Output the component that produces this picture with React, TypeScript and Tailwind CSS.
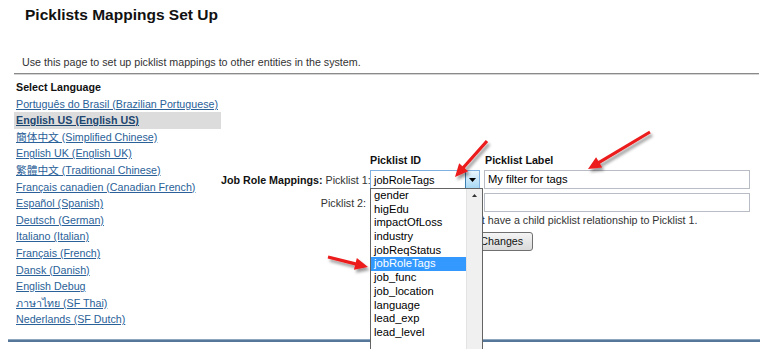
import React from "react";

const LANGUAGES: { label: string; selected?: boolean }[] = [
  { label: "Português do Brasil (Brazilian Portuguese)" },
  { label: "English US (English US)", selected: true },
  { label: "簡体中文 (Simplified Chinese)" },
  { label: "English UK (English UK)" },
  { label: "繁體中文 (Traditional Chinese)" },
  { label: "Français canadien (Canadian French)" },
  { label: "Español (Spanish)" },
  { label: "Deutsch (German)" },
  { label: "Italiano (Italian)" },
  { label: "Français (French)" },
  { label: "Dansk (Danish)" },
  { label: "English Debug" },
  { label: "ภาษาไทย (SF Thai)" },
  { label: "Nederlands (SF Dutch)" },
];

const OPTIONS = [
  "gender",
  "higEdu",
  "impactOfLoss",
  "industry",
  "jobReqStatus",
  "jobRoleTags",
  "job_func",
  "job_location",
  "language",
  "lead_exp",
  "lead_level",
];

// polygon for a callout arrow, tail -> tip
function arrowPoints(tx: number, ty: number, hx: number, hy: number) {
  const shaft = 3.2;
  const headLen = 13;
  const headW = 12;
  const dx = hx - tx;
  const dy = hy - ty;
  const len = Math.hypot(dx, dy);
  const ux = dx / len;
  const uy = dy / len;
  const px = -uy;
  const py = ux;
  const bx = hx - ux * headLen;
  const by = hy - uy * headLen;
  const pts = [
    [tx + (px * shaft) / 2, ty + (py * shaft) / 2],
    [bx + (px * shaft) / 2, by + (py * shaft) / 2],
    [bx + (px * headW) / 2, by + (py * headW) / 2],
    [hx, hy],
    [bx - (px * headW) / 2, by - (py * headW) / 2],
    [bx - (px * shaft) / 2, by - (py * shaft) / 2],
    [tx - (px * shaft) / 2, ty - (py * shaft) / 2],
  ];
  return pts.map((p) => p.join(",")).join(" ");
}

function Arrows() {
  return (
    <svg className="pointer-events-none absolute inset-0 z-20" width={770} height={349}>
      <defs>
        <filter id="shadow" x="-20%" y="-20%" width="140%" height="140%">
          <feDropShadow dx="2" dy="3" stdDeviation="1.6" floodColor="#000" floodOpacity="0.4" />
        </filter>
      </defs>
      <g fill="#ec1c1c" filter="url(#shadow)">
        <polygon points={arrowPoints(487, 141, 455, 177)} />
        <polygon points={arrowPoints(650, 132, 588, 169)} />
        <polygon points={arrowPoints(328, 257, 368, 267)} />
      </g>
    </svg>
  );
}

function PicklistSelect() {
  return (
    <div className="relative h-[19px] w-[110px]">
      <div className="flex h-full w-full items-center border border-[#7fb0df] bg-white">
        <span className="flex-1 pl-[3px] text-[11px] leading-[14px] text-black">jobRoleTags</span>
        <div className="flex h-full w-[14px] items-center justify-center border-l border-[#3c7fb1] bg-gradient-to-b from-[#eaf6fd] to-[#a7d9f5]">
          <svg width="7" height="4" viewBox="0 0 7 4">
            <path d="M0 0h7L3.5 4z" fill="#000" />
          </svg>
        </div>
      </div>

      {/* open option list */}
      <div className="absolute left-0 top-[18px] z-10 flex h-[180px] w-[113px] border border-[#646464] bg-white">
        <div className="w-[95px]">
          {OPTIONS.map((opt) => (
            <div
              key={opt}
              className={
                opt === "jobRoleTags"
                  ? "h-[13.7px] bg-[#3399ff] pl-[3px] text-[11.2px] leading-[13.7px] text-white"
                  : "h-[13.7px] pl-[3px] text-[11.2px] leading-[13.7px] text-black"
              }
            >
              {opt}
            </div>
          ))}
        </div>
        <div className="flex w-[16px] justify-center border-l border-[#e3e3e3] bg-[#f0f0f0] pt-[5px]">
          <svg width="5" height="3" viewBox="0 0 5 3">
            <path d="M0 3h5L2.5 0z" fill="#333" />
          </svg>
        </div>
      </div>
    </div>
  );
}

export default function App() {
  return (
    <div className="relative h-[349px] w-[770px] overflow-hidden bg-white font-['Liberation_Sans',Arial,'Noto_Sans_CJK_SC',sans-serif] text-[10.7px] text-[#333]">
      <h1 className="pl-[25px] pt-[4px] text-[15.5px] font-bold leading-[22px] text-[#111]">
        Picklists Mappings Set Up
      </h1>
      <p className="mt-[29px] pl-[22px] leading-[14px]">
        Use this page to set up picklist mappings to other entities in the system.
      </p>
      <div className="ml-[14px] mt-[4px] h-[2px] w-[745px] border-t border-[#8a8a8a] bg-[#d4d4d4]" />

      <div className="ml-[14px] flex">
        {/* Language list */}
        <div className="mt-[4px] w-[207px]">
          <div className="h-[16.6px] pl-[2px] font-bold leading-[16.6px] text-[#111]">Select Language</div>
          {LANGUAGES.map((lang) => (
            <div
              key={lang.label}
              className={
                lang.selected
                  ? "h-[16.6px] bg-[#dcdcdc] pl-[2px] leading-[16.6px]"
                  : "h-[16.6px] pl-[2px] leading-[16.6px]"
              }
            >
              <a
                href="#"
                className={
                  lang.selected
                    ? "whitespace-nowrap font-bold text-[#1d4670] underline"
                    : "whitespace-nowrap text-[#2a6198] underline"
                }
              >
                {lang.label}
              </a>
            </div>
          ))}
        </div>

        {/* Mapping form */}
        <div className="pt-[77px]">
          <div className="flex h-[16px] font-bold leading-[16px] text-[#111]">
            <div className="w-[149px]" />
            <div className="w-[114px]">Picklist ID</div>
            <div className="pl-[1px]">Picklist Label</div>
          </div>

          <div className="mt-[2px] flex h-[19px] items-center">
            <div className="w-[149px] whitespace-nowrap pr-[4px] text-right leading-[14px]">
              <span className="font-bold text-[#111]">Job Role Mappings:</span> Picklist 1:
            </div>
            <div className="w-[114px]">
              <PicklistSelect />
            </div>
            <div className="flex h-[19px] w-[266px] items-center border border-[#b8bcc4] bg-white pl-[3px] text-[11.2px] text-black">
              My filter for tags
            </div>
          </div>

          <div className="mt-[4px] flex h-[19px] items-center">
            <div className="w-[149px] pr-[4px] text-right leading-[14px]">Picklist 2:</div>
            <div className="w-[114px]">
              <div className="h-[19px] w-[110px] border border-[#b8bcc4] bg-white" />
            </div>
            <div className="h-[19px] w-[266px] border border-[#b8bcc4] bg-white" />
          </div>

          <div className="mt-[1px] flex h-[14px] leading-[14px]">
            <div className="w-[149px]" />
            <div className="whitespace-nowrap pl-[18px]">
              Note: Picklist 2 must have a child picklist relationship to Picklist 1.
            </div>
          </div>

          <div className="mt-[5px] flex">
            <div className="w-[149px]" />
            <button className="ml-[73px] flex h-[19px] items-center rounded-[3px] border border-[#707070] bg-gradient-to-b from-[#f4f4f4] to-[#dadada] px-[9px] text-[10.7px] text-[#111]">
              Save Changes
            </button>
          </div>
        </div>
      </div>

      <div className="ml-[8px] mt-[11px] h-[3px] w-[752px] border-t border-[#8fa7be] bg-[#56769a]" />

      <Arrows />
    </div>
  );
}
